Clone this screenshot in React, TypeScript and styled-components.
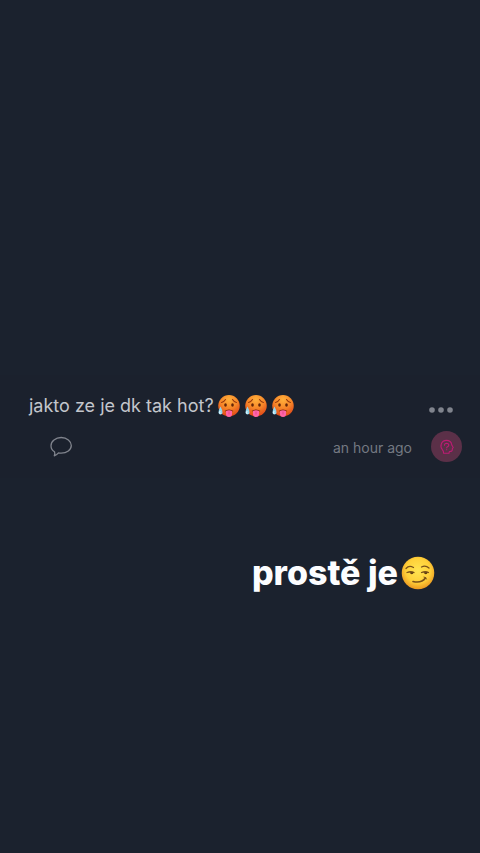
import React from "react";
import styled, { createGlobalStyle } from "styled-components";

const GlobalStyle = createGlobalStyle`
  *, *::before, *::after { box-sizing: border-box; }
  body {
    margin: 0;
    background: #1b222e;
    font-family: Inter, "Liberation Sans", sans-serif;
  }
`;

const Story = styled.main`
  display: flex;
  flex-direction: column;
  min-height: 100vh;
  padding-top: 44vh;
  background: #1b222e;
`;

const Post = styled.article`
  display: flex;
  flex-direction: column;
  gap: 10px;
  padding: 16px 18px 16px 29px;
  background: #1b212d;
`;

const PostHeader = styled.div`
  display: flex;
  align-items: center;
  justify-content: space-between;
`;

const PostText = styled.p`
  display: flex;
  align-items: center;
  margin: 0;
  color: #c3c6cc;
  font-size: 18px;
  line-height: 30px;
  white-space: nowrap;
`;

const EmojiRow = styled.span`
  display: flex;
  gap: 3px;
  margin-left: 3px;
`;

const Emoji = styled.svg<{ $size: number }>`
  display: block;
  flex: none;
  width: ${(p) => p.$size}px;
  height: ${(p) => p.$size}px;
`;

const IconButton = styled.button`
  display: flex;
  padding: 0;
  border: 0;
  background: none;
  color: #80848d;
  cursor: pointer;
`;

const MoreButton = styled(IconButton)`
  padding: 8px 9px 0 0;
`;

const PostFooter = styled.div`
  display: flex;
  align-items: center;
  justify-content: space-between;
  padding-left: 20px;
`;

const Meta = styled.div`
  display: flex;
  align-items: center;
  gap: 19px;
`;

const Time = styled.time`
  padding-top: 2px;
  color: #747982;
  font-size: 14px;
  line-height: 20px;
`;

const Avatar = styled.span`
  display: flex;
  align-items: center;
  justify-content: center;
  width: 31px;
  height: 31px;
  border-radius: 50%;
  background: #5b3048;
  color: #bd1b73;
`;

const Caption = styled.h1`
  display: flex;
  align-items: center;
  justify-content: flex-end;
  gap: 3px;
  margin: 0;
  padding: 75px 45px 24px 24px;
  color: #fcfdff;
  font-size: 34px;
  font-weight: 800;
  line-height: 40px;
  white-space: nowrap;
`;

function HotFace() {
  return (
    <Emoji $size={24} viewBox="0 0 48 48" role="img" aria-label="hot face">
      <defs>
        <radialGradient id="hot" cx="50%" cy="22%" r="78%">
          <stop offset="0" stopColor="#ffb03a" />
          <stop offset="0.5" stopColor="#f78729" />
          <stop offset="1" stopColor="#de4518" />
        </radialGradient>
      </defs>
      <circle cx="24" cy="23.500" r="21.500" fill="url(#hot)" />
      <path d="M9 17q5-1 8-6M39 17q-5-1-8-6" fill="none" stroke="#96380e" strokeWidth="2.200" strokeLinecap="round" />
      <ellipse cx="17" cy="22" rx="2.600" ry="3.600" fill="#632508" />
      <ellipse cx="31" cy="22" rx="2.600" ry="3.600" fill="#632508" />
      <path d="M15 34q9-6 18 0q-9 4-18 0z" fill="#782109" />
      <path d="M18 34q6-3 12 0v6q0 6-6 6t-6-6z" fill="#ff65a8" />
      <path d="M24 35v6" stroke="#df3d83" strokeWidth="1.500" />
      <path d="M7 25q-4 7-4 12a4 4 0 0 0 8 0q0-5-4-12z" fill="#8fd6ee" />
      <path d="M6 34q-2 5 1 6" fill="none" stroke="#f0fcff" strokeWidth="2" />
    </Emoji>
  );
}

function SmirkFace() {
  return (
    <Emoji $size={34} viewBox="0 0 68 68" role="img" aria-label="smirking face">
      <defs>
        <radialGradient id="smirk" cx="50%" cy="42%" r="58%">
          <stop offset="0" stopColor="#ffe452" />
          <stop offset="0.650" stopColor="#ffd039" />
          <stop offset="1" stopColor="#eb9820" />
        </radialGradient>
      </defs>
      <circle cx="34" cy="34" r="32.500" fill="url(#smirk)" />
      <g fill="none" stroke="#795019" strokeLinecap="round">
        <path d="M10 25q6-7 15-2" strokeWidth="2.500" />
        <path d="M41 22q8-4 15 2" strokeWidth="2.500" />
        <path d="M12 33q8-3 14 0M41 33q8-3 14 0" strokeWidth="2.500" />
        <path d="M24 51q17 4 25-7" strokeWidth="3.200" />
        <path d="M46 42q4 0 5 4" strokeWidth="2" />
      </g>
      <path d="M18 32.500h7q0 4-3.500 4t-3.500-4zM46 32.500h7q0 4-3.500 4t-3.500-4z" fill="#5c3a12" />
    </Emoji>
  );
}

function CommentIcon() {
  return (
    <svg width="24" height="22" viewBox="0 0 24 22" fill="none" stroke="currentColor" strokeWidth="1.300" strokeLinejoin="round" aria-hidden="true">
      <path d="M5.300 19.800C6 18.500 6 17.300 5.500 15.800C3.300 14.400 2 12.200 2 9.700C2 5.200 6.500 1.500 12.200 1.500S22.300 5.200 22.300 9.500S17.800 17.200 12.200 17.200C11.200 17.200 10.300 17.100 9.500 16.900C8.200 18.400 6.800 19.400 5.300 19.800Z" />
    </svg>
  );
}

function DotsIcon() {
  return (
    <svg width="24" height="6" viewBox="0 0 24 6" fill="currentColor" aria-hidden="true">
      <circle cx="3" cy="3" r="2.800" />
      <circle cx="12" cy="3" r="2.800" />
      <circle cx="21" cy="3" r="2.800" />
    </svg>
  );
}

function HeadIcon() {
  return (
    <svg width="16" height="16" viewBox="0 0 16 16" fill="none" stroke="currentColor" strokeWidth="1.100" strokeLinecap="round" strokeLinejoin="round" aria-hidden="true">
      <path d="M4.600 14.300C4.700 12.700 4.300 11.600 3.200 10.400C1.900 8.900 1.700 6.800 2.300 5C3.100 2.700 5.100 1.400 7.500 1.400C10.300 1.400 12.300 3.100 12.700 5.600C12.800 6.700 14.100 7.700 14.200 8.600C14.200 9.100 13.300 9.200 13.300 9.800C13.500 11.600 12.900 12.500 10.600 12.500C10 12.900 10.200 13.700 10 14.300Z" />
      <path d="M5.500 6.200Q5.500 4.200 7.600 4.200Q9.800 4.300 9.800 6.100Q9.700 7.300 8.500 7.700Q7.600 8 7.700 9M7.700 10.600V10.700" />
    </svg>
  );
}

export default function App() {
  return (
    <>
      <GlobalStyle />
      <Story>
        <Post>
          <PostHeader>
            <PostText>
              jakto ze je dk tak hot?
              <EmojiRow>
                <HotFace />
                <HotFace />
                <HotFace />
              </EmojiRow>
            </PostText>
            <MoreButton type="button" aria-label="More options">
              <DotsIcon />
            </MoreButton>
          </PostHeader>
          <PostFooter>
            <IconButton type="button" aria-label="Comment">
              <CommentIcon />
            </IconButton>
            <Meta>
              <Time>an hour ago</Time>
              <Avatar>
                <HeadIcon />
              </Avatar>
            </Meta>
          </PostFooter>
        </Post>
        <Caption>
          prostě je
          <SmirkFace />
        </Caption>
      </Story>
    </>
  );
}
